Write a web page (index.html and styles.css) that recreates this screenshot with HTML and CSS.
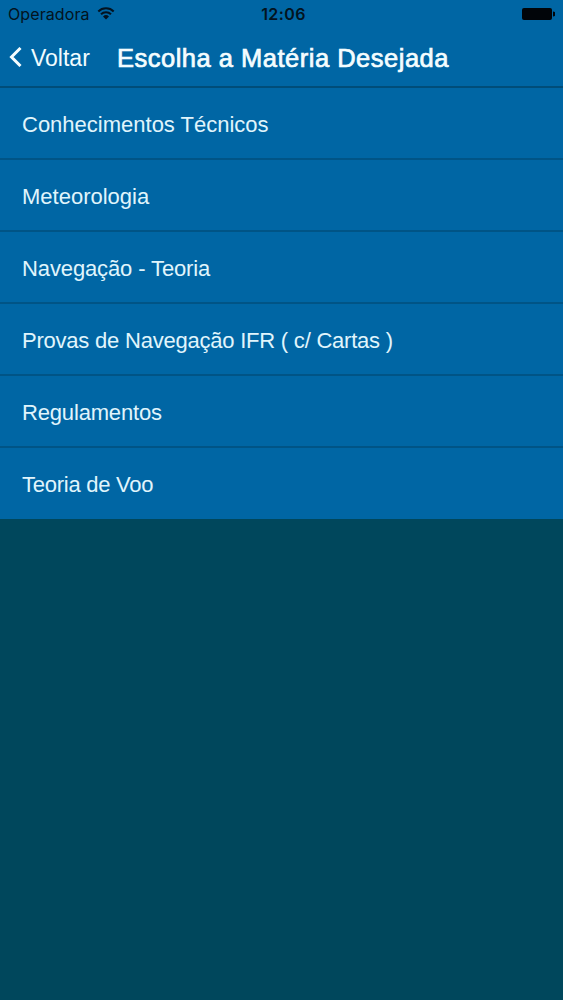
FILE: index.html
```html
<!DOCTYPE html>
<html lang="pt-BR">
<head>
<meta charset="UTF-8" />
<meta name="viewport" content="width=device-width, initial-scale=1" />
<title>Escolha a Matéria Desejada</title>
<link rel="stylesheet" href="styles.css">
</head>
<body>
  <header class="topo">
    <div class="status-bar">
      <div class="operadora">
        <span class="operadora-nome">Operadora</span>
        <svg class="wifi" width="18" height="13" viewBox="0 0 18 13">
          <path d="M1.300 4.500a10.900 10.900 0 0 1 15.400 0M4 7.300a7.100 7.100 0 0 1 10 0" fill="none" stroke="#031320" stroke-width="2" />
          <path d="M9 12.400 6 9.400a4.300 4.300 0 0 1 6 0z" fill="#031320" />
        </svg>
      </div>
      <span class="hora">12:06</span>
      <svg class="bateria" width="34" height="14" viewBox="0 0 34 14">
        <rect x="1" y="1" width="30" height="12" rx="2" fill="#010509" />
        <path d="M32 4.500a2.500 2.500 0 0 1 0 5z" fill="#010509" />
      </svg>
    </div>
    <nav class="nav-bar">
      <a class="voltar" href="#">
        <svg class="seta" width="14" height="20" viewBox="0 0 14 20">
          <path d="M12.500 1 3.500 10l9 9" fill="none" stroke="#f4fdff" stroke-width="3" />
        </svg>
        <span class="voltar-texto">Voltar</span>
      </a>
      <h1 class="titulo">Escolha a Matéria Desejada</h1>
    </nav>
  </header>

  <ul class="lista">
    <li>Conhecimentos Técnicos</li>
    <li>Meteorologia</li>
    <li class="navegacao">Navegação - Teoria</li>
    <li class="provas">Provas de Navegação IFR ( c/ Cartas )</li>
    <li class="regulamentos">Regulamentos</li>
    <li class="teoria">Teoria de Voo</li>
  </ul>
</body>
</html>
```

FILE: styles.css
```css
body {
  margin: 0;
  min-height: 100vh;
  font-family: "Liberation Sans", Arial, sans-serif;
  color: #e0f5fc;
  background: #00475c;
}
.topo {
  height: 86px;
  background: #0066a4;
  border-bottom: 2px solid #004d79;
}
.status-bar {
  display: grid;
  grid-template-columns: 1fr auto 1fr;
  align-items: center;
  height: 28px;
  padding: 0 8px;
  color: #031320;
  font-family: Inter, Roboto, sans-serif;
}
.operadora {
  display: flex;
  align-items: center;
  gap: 7px;
  font-size: 16px;
  letter-spacing: 0.1px;
}
.operadora-nome {
  width: 82px;
}
.wifi {
  margin-top: -1px;
}
.hora {
  padding-left: 4px;
  font-size: 16px;
  font-weight: 600;
  letter-spacing: 0.4px;
}
.bateria {
  justify-self: end;
}
.nav-bar {
  display: flex;
  align-items: center;
  height: 58px;
  padding-left: 8px;
}
.voltar {
  display: flex;
  align-items: center;
  gap: 9px;
  width: 109px;
  color: #f0fcff;
  font-size: 23px;
  text-decoration: none;
}
.voltar-texto {
  padding-top: 2px;
}
.titulo {
  margin: 0;
  padding-top: 2px;
  color: #f4fdff;
  font-size: 25.5px;
  font-weight: 400;
  letter-spacing: 0.5px;
  white-space: nowrap;
  -webkit-text-stroke: 0.7px #f4fdff;
}
.lista {
  margin: 0;
  padding: 0;
  list-style: none;
}
.lista li {
  display: flex;
  align-items: center;
  box-sizing: border-box;
  height: 72px;
  padding: 4px 0 0 22px;
  font-size: 22px;
  white-space: nowrap;
  background: #0066a4;
  border-bottom: 2px solid #005486;
}
.lista li:last-child {
  height: 71px;
  padding-top: 2px;
  border-bottom: none;
}
.lista .navegacao {
  letter-spacing: -0.12px;
}
.lista .provas {
  letter-spacing: -0.22px;
}
.lista .regulamentos {
  letter-spacing: -0.17px;
}
.lista .teoria {
  letter-spacing: -0.25px;
}
```
